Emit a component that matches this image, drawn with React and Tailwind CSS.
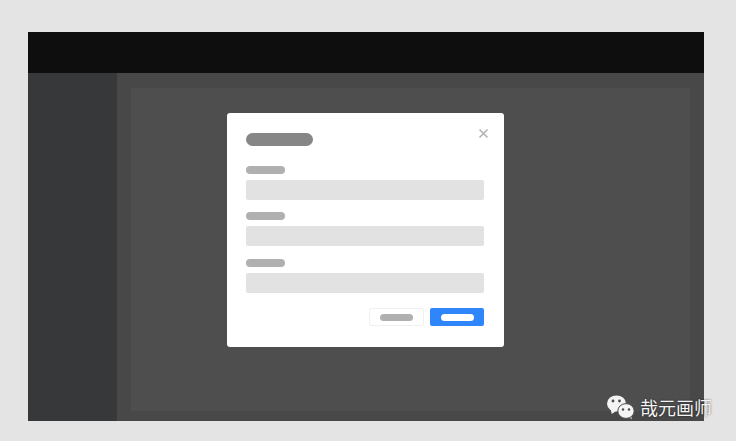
function Field({ mt }) {
  return (
    <div className={mt}>
      <div className="w-[39px] h-[8px] rounded-full bg-[#b0b0b0]" />
      <div className="mt-[6px] h-[20px] rounded-[2px] bg-[#e2e2e2]" />
    </div>
  )
}

function WechatIcon() {
  return (
    <svg className="w-[29px] h-[25px]" viewBox="0 0 29 25">
      <ellipse cx="10.5" cy="8.5" rx="9.5" ry="8" fill="#f4f4f4" />
      <path d="M4.5 13l1.2 6 4.5-3z" fill="#f4f4f4" />
      <circle cx="7" cy="6" r="1.4" fill="#4a4a4a" />
      <circle cx="13.5" cy="6" r="1.4" fill="#4a4a4a" />
      <path d="M23 21.5l2.5 3-.2-4.5z" fill="#f4f4f4" />
      <ellipse cx="20" cy="16" rx="8.2" ry="7.4" fill="#f4f4f4" stroke="#4a4a4a" />
      <circle cx="17" cy="14.5" r="1.2" fill="#4a4a4a" />
      <circle cx="23" cy="14.5" r="1.2" fill="#4a4a4a" />
    </svg>
  )
}

export default function App() {
  return (
    <div className="relative w-[736px] h-[441px] overflow-hidden bg-[#e4e4e4] pt-[32px] pl-[28px]">
      <div className="relative w-[676px] h-[389px] flex flex-col bg-[#4b4b4b]">
        <div className="h-[41px] bg-[#0e0e0e]" />
        <div className="flex-1 flex">
          <div className="w-[89px] bg-[#373839]" />
          <div className="flex-1 pt-[15px] px-[14px] pb-[10px] bg-[#484848]">
            <div className="h-full bg-[#4e4e4e]" />
          </div>
        </div>

        {/* Modal */}
        <div className="absolute left-[199px] top-[81px] w-[277px] h-[234px] rounded-[3px] bg-white pl-[19px] pr-[20px] pt-[20px]">
          <div className="w-[67px] h-[13px] rounded-full bg-[#868686]" />
          <svg
            className="absolute left-[250.5px] top-[15px] w-[11px] h-[11px]"
            viewBox="0 0 11 11"
            fill="none"
            stroke="#b4b4b4"
            strokeWidth="1.7"
          >
            <path d="M1.5 1.5l8 8M9.5 1.5l-8 8" />
          </svg>
          <Field mt="mt-[20px]" />
          <Field mt="mt-[12px]" />
          <Field mt="mt-[13px]" />
          <div className="mt-[15px] flex justify-end gap-[6px]">
            <div className="w-[55px] h-[18px] flex items-center justify-center rounded-[2px] border border-[#f0f0f0] bg-white">
              <div className="w-[33px] h-[7px] rounded-full bg-[#b0b0b0]" />
            </div>
            <div className="w-[54px] h-[18px] flex items-center justify-center rounded-[2px] bg-[#2f86fb]">
              <div className="w-[33px] h-[7px] rounded-full bg-white" />
            </div>
          </div>
        </div>
      </div>

      {/* Watermark */}
      <div className="absolute left-[606px] top-[395px] flex items-center gap-[5px]">
        <WechatIcon />
        <span className="text-[18px] leading-[25px] text-[#f4f4f4] [text-shadow:0_0_2px_rgba(0,0,0,0.7)] font-['Noto_Sans_CJK_SC',sans-serif]">哉元画师</span>
      </div>
    </div>
  )
}
